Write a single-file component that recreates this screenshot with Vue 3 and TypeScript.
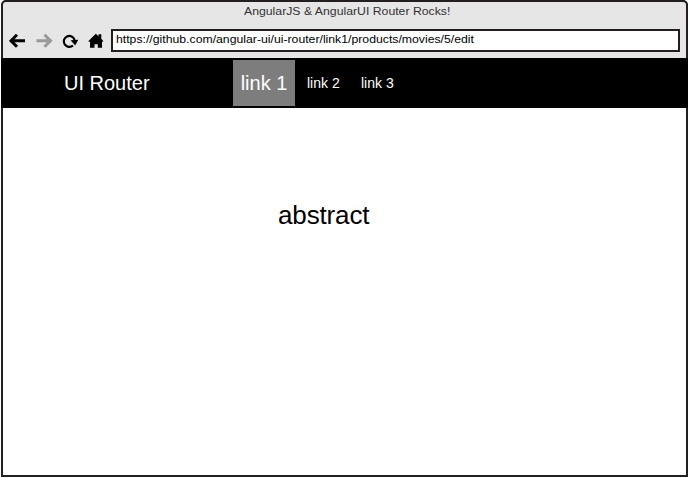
<script setup lang="ts">
import { ref } from 'vue'

interface NavLink {
  id: number
  label: string
}

const title = 'AngularJS & AngularUI Router Rocks!'
const url = 'https://github.com/angular-ui/ui-router/link1/products/movies/5/edit'
const links: NavLink[] = [
  { id: 1, label: 'link 1' },
  { id: 2, label: 'link 2' },
  { id: 3, label: 'link 3' },
]
const active = ref(1)
</script>

<template>
  <div class="stage">
    <div class="window">
      <header class="chrome">
        <div class="title"><span class="title-text">{{ title }}</span></div>
        <div class="toolbar">
          <svg class="icon back" width="17" height="16" viewBox="0 0 17 16">
            <path d="M8 1.800 2 7.800l6 6M2.500 7.800H16" />
          </svg>
          <svg class="icon forward" width="17" height="16" viewBox="0 0 17 16">
            <path d="M8.500 1.800 14.500 7.800l-6 6M14 7.800H0.500" />
          </svg>
          <svg class="icon reload" width="17" height="16" viewBox="0 0 17 16">
            <path class="arc" d="M11 12.500A5.500 5.500 0 1 1 12.600 7" />
            <path class="head" d="M8.600 7.200L16.300 6.800L13.200 12.400Z" />
          </svg>
          <svg class="icon home" width="16" height="16" viewBox="0 0 16 16">
            <path d="M0.500 8 7.800 0.700 10.600 3.300V1.300H13.300V5.700L15.200 8V8.800H14V14.700H9.800V11.200H6.500V14.700H2V8.800H0.500Z" />
          </svg>
          <div class="address"><span class="address-text">{{ url }}</span></div>
        </div>
      </header>
      <nav class="navbar">
        <span class="brand">UI Router</span>
        <a
          v-for="link in links"
          :key="link.id"
          class="link"
          :class="{ active: link.id === active }"
          @click="active = link.id"
        >{{ link.label }}</a>
      </nav>
      <main class="content"><span class="state">abstract</span></main>
    </div>
  </div>
</template>

<style>
body {
  margin: 0;
  background: #fff;
}
</style>

<style scoped>
.stage {
  box-sizing: border-box;
  width: 689px;
  height: 478px;
  padding: 0 1px 1px;
  font-family: "Liberation Sans", Arial, sans-serif;
}
.window {
  display: flex;
  flex-direction: column;
  height: 477px;
  overflow: hidden;
  border-radius: 5px 5px 0 0;
  background: #231f20;
}
.chrome {
  box-sizing: border-box;
  height: 58px;
  border: 2px solid #231f20;
  border-bottom: 0;
  border-radius: 5px 5px 0 0;
  background: #e6e6e6;
}
.title {
  height: 27px;
  line-height: 18px;
  padding-left: 241px;
  font-size: 11px;
  color: #333;
  white-space: nowrap;
}
.title-text,
.address-text {
  display: inline-block;
  transform-origin: 0 50%;
}
.title-text {
  transform: scaleX(1.114);
}
.toolbar {
  display: flex;
  padding: 0 6px;
}
.icon {
  flex: none;
  margin-top: 4px;
  fill: none;
  stroke: #000;
  stroke-width: 3;
}
.forward {
  margin-left: 10px;
  stroke: #999;
}
.reload {
  margin-left: 9px;
}
.reload .arc {
  stroke-width: 2.2;
}
.reload .head,
.home {
  fill: #000;
  stroke: none;
}
.home {
  margin-left: 9px;
}
.address {
  box-sizing: border-box;
  flex: 1;
  height: 23px;
  margin-left: 7px;
  padding-left: 3px;
  border: 2px solid #231f20;
  background: #fff;
  font-size: 11px;
  line-height: 17px;
  color: #000;
  white-space: nowrap;
}
.address-text {
  transform: scaleX(1.113);
}
.navbar {
  display: flex;
  box-sizing: border-box;
  height: 50px;
  padding: 2px 0 2px 63px;
  background: #000;
  color: #fff;
  line-height: 46px;
}
.brand {
  width: 169px;
  font-size: 20px;
}
.link {
  width: 54px;
  font-size: 14px;
  cursor: pointer;
}
.link.active {
  width: 62px;
  margin-right: 12px;
  background: #7d7d7d;
  font-size: 20px;
  text-align: center;
}
.content {
  flex: 1;
  margin: 0 2px 2px;
  padding: 92px 0 0 275px;
  background: #fff;
  color: #000;
  font-size: 26px;
  line-height: 30px;
  letter-spacing: -0.14px;
}
</style>
